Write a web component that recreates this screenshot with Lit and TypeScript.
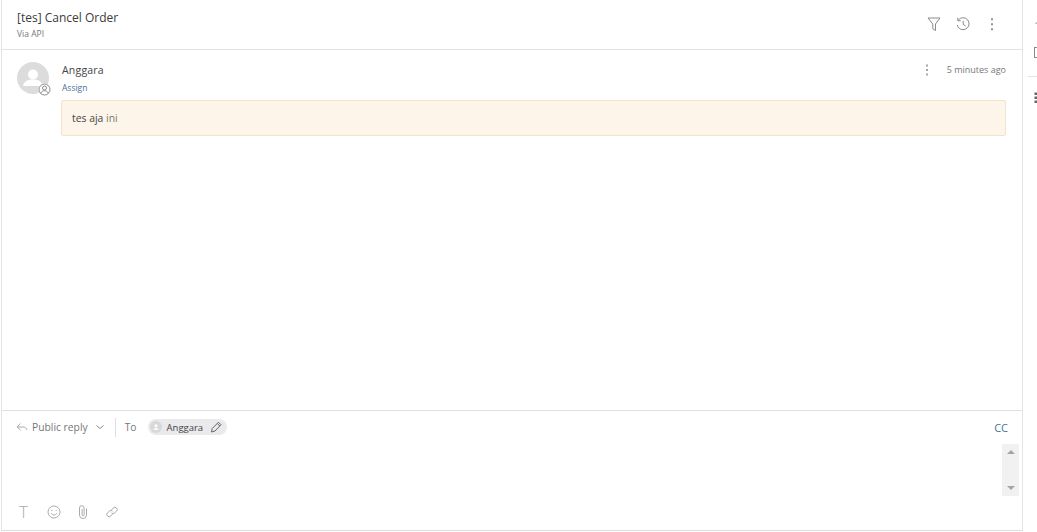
import { LitElement, html, css } from 'lit';
import { customElement } from 'lit/decorators.js';

@customElement('app-root')
export class AppRoot extends LitElement {
  static styles = css`
    :host {
      display: block;
      width: 1037px;
      height: 532px;
      overflow: hidden;
      background: #fff;
      font-family: 'Open Sans', sans-serif;
      color: #333;
    }
    .page {
      display: flex;
      height: 531px;
    }
    .main {
      width: 1022px;
      flex: none;
      box-sizing: border-box;
      margin-left: 1px;
      border-left: 1px solid #e4e4e4;
      border-right: 1px solid #e4e4e4;
      border-bottom: 1px solid #dcdcdc;
      display: flex;
      flex-direction: column;
    }
    .head {
      height: 50px;
      flex: none;
      box-sizing: border-box;
      border-bottom: 1px solid #e2e2e2;
      padding: 9px 15px 0 15px;
      display: flex;
      justify-content: space-between;
    }
    .title {
      font-size: 12px;
      line-height: 17px;
      color: #3b3b3b;
    }
    .via {
      font-size: 8.5px;
      line-height: 12px;
      margin-top: 2px;
      color: #777;
    }
    .head-icons {
      display: flex;
      gap: 13px;
      padding: 7px 7px 0 0;
    }
    .head-icons svg {
      width: 16px;
      height: 16px;
    }
    svg {
      display: block;
      fill: none;
      stroke: #8a8a8a;
      stroke-width: 1;
    }
    .thread {
      flex: 1;
      padding: 12px 16px 0 15px;
      display: flex;
      gap: 13px;
    }
    .avatar {
      position: relative;
      width: 32px;
      height: 32px;
      flex: none;
    }
    .avatar .face {
      width: 32px;
      height: 32px;
    }
    .badge {
      position: absolute;
      right: -2px;
      bottom: -2px;
      width: 13px;
      height: 13px;
      border-radius: 50%;
      background: #fff;
    }
    .body {
      flex: 1;
      min-width: 0;
    }
    .who {
      display: flex;
      justify-content: space-between;
      align-items: flex-start;
    }
    .name {
      font-size: 10.5px;
      line-height: 16px;
      letter-spacing: 0.2px;
      color: #444;
    }
    .assign {
      font-size: 8.5px;
      line-height: 12px;
      margin-top: 4px;
      color: #4a6f9c;
    }
    .when {
      display: flex;
      align-items: center;
      gap: 18px;
      font-size: 9px;
      line-height: 16px;
      color: #777;
    }
    .msg {
      margin: 6px 0 0 -1px;
      height: 36px;
      box-sizing: border-box;
      background: #fef5ea;
      border: 1px solid #f6e2c6;
      border-radius: 2px;
      padding: 0 10px;
      font-size: 10.4px;
      line-height: 34px;
      color: #444;
    }
    .msg span {
      color: #777;
    }
    .composer {
      height: 120px;
      flex: none;
      box-sizing: border-box;
      border-top: 1px solid #e0e0e0;
      display: flex;
      flex-direction: column;
    }
    .to-row {
      display: flex;
      align-items: center;
      height: 20px;
      margin-top: 6px;
      padding: 0 14px 0 14px;
      font-size: 10.3px;
      color: #777;
    }
    .reply {
      margin-left: 4px;
    }
    .caret {
      margin-left: 8px;
      width: 8px;
      height: 8px;
    }
    .sep {
      width: 1px;
      height: 19px;
      background: #dedede;
      margin: 0 9px 0 11px;
    }
    .chip {
      display: flex;
      align-items: center;
      height: 16px;
      margin-left: 11px;
      padding: 0 5px 0 2px;
      gap: 5px;
      background: #eaeaec;
      border-radius: 8px;
      font-size: 9.5px;
      color: #444;
    }
    .chip svg {
      margin-left: 2px;
    }
    .chip .mini {
      margin-left: 0;
    }
    .cc {
      margin-left: auto;
      font-size: 11px;
      color: #4a7396;
    }
    .editor {
      flex: 1;
      display: flex;
      justify-content: flex-end;
      padding: 7px 3px 0 0;
    }
    .scroll {
      width: 17px;
      height: 52px;
      background: #f1f1f1;
      display: flex;
      flex-direction: column;
      justify-content: space-between;
      align-items: center;
      padding: 6px 0;
      box-sizing: border-box;
    }
    .up, .down {
      width: 0;
      height: 0;
      border-left: 4px solid transparent;
      border-right: 4px solid transparent;
    }
    .up { border-bottom: 4px solid #a5a5a5; }
    .down { border-top: 4px solid #a5a5a5; }
    .tools {
      display: flex;
      align-items: center;
      gap: 15px;
      height: 16px;
      padding: 0 0 10px 17px;
    }
    .tools svg {
      width: 14px;
      height: 14px;
    }
    .tools .t {
      font-size: 17px;
      font-weight: 300;
      line-height: 16px;
      color: #aaa;
      width: 13px;
    }
    .side {
      flex: 1;
      min-width: 0;
      position: relative;
    }
    .side svg {
      position: absolute;
    }
    .rule {
      position: absolute;
      left: 5px;
      right: 0;
      top: 76px;
      height: 1px;
      background: #e4e4e4;
    }
  `;

  render() {
    return html`
      <div class="page">
        <div class="main">
          <div class="head">
            <div>
              <div class="title">[tes] Cancel Order</div>
              <div class="via">Via API</div>
            </div>
            <div class="head-icons">
              <svg viewBox="0 0 16 16">
                <path d="M2 2h12L9.500 8v6.500L6.800 12.800V8z" />
              </svg>
              <svg viewBox="0 0 16 16">
                <path d="M3.200 4.200A6 6 0 1 1 2.200 9" />
                <path d="M2.800 1.800v3h3M8.200 4.800v3.600l2.400 1.600" />
              </svg>
              <svg viewBox="0 0 16 16">
                <path d="M8 2.300v2M8 7.300v2M8 12.300v2" stroke="#777" stroke-width="1.600" />
              </svg>
            </div>
          </div>

          <div class="thread">
            <div class="avatar">
              <svg class="face" viewBox="0 0 32 32" style="stroke:none">
                <circle cx="16" cy="16" r="16" fill="#dcdcdc" />
                <circle cx="16" cy="12.500" r="5" fill="#fff" />
                <path d="M6 24c1-5 5-6.500 10-6.500S25 19 26 24z" fill="#fff" />
              </svg>
              <div class="badge">
                <svg viewBox="0 0 13 13" width="13" height="13">
                  <circle cx="6.500" cy="6.500" r="5.500" />
                  <circle cx="6.500" cy="5" r="2" />
                  <path d="M2.800 10.500c.5-2 2-2.800 3.700-2.800s3.200.8 3.700 2.800" />
                </svg>
              </div>
            </div>
            <div class="body">
              <div class="who">
                <div>
                  <div class="name">Anggara</div>
                  <div class="assign">Assign</div>
                </div>
                <div class="when">
                  <svg viewBox="0 0 4 14" width="4" height="14">
                    <path d="M2 1.500v2M2 6v2M2 10.500v2" stroke="#888" stroke-width="1.500" />
                  </svg>
                  <span>5 minutes ago</span>
                </div>
              </div>
              <div class="msg">tes aja <span>ini</span></div>
            </div>
          </div>

          <div class="composer">
            <div class="to-row">
              <svg viewBox="0 0 12 10" width="12" height="10">
                <path d="M4.500 1.500 1 5l3.500 3M1 5h6c2 0 3.500 1 4 3" stroke="#aaa" />
              </svg>
              <span class="reply">Public reply</span>
              <svg class="caret" viewBox="0 0 8 8">
                <path d="M.5 2.500 4 5.500l3.500-3" />
              </svg>
              <div class="sep"></div>
              <span>To</span>
              <div class="chip">
                <svg class="mini" viewBox="0 0 12 12" width="12" height="12" style="stroke:none">
                  <circle cx="6" cy="6" r="6" fill="#d8d8d8" />
                  <circle cx="6" cy="4.800" r="1.500" fill="#fff" />
                  <path d="M3.300 8.800c.3-1.400 1.300-1.900 2.700-1.900s2.400.5 2.700 1.900z" fill="#fff" />
                </svg>
                <span>Anggara</span>
                <svg viewBox="0 0 12 12" width="12" height="12">
                  <path d="M1.500 11l.7-3.500L8.500 1.200l2.500 2.500-6 6.300zM7.300 2.500l2.500 2.500" stroke="#666" />
                </svg>
              </div>
              <span class="cc">CC</span>
            </div>
            <div class="editor">
              <div class="scroll">
                <div class="up"></div>
                <div class="down"></div>
              </div>
            </div>
            <div class="tools">
              <div class="t">T</div>
              <svg viewBox="0 0 14 14">
                <circle cx="7" cy="7" r="6" stroke="#aaa" />
                <path d="M4.200 8.200c.7 1.300 1.700 1.800 2.800 1.800s2.100-.5 2.800-1.800" stroke="#aaa" />
                <path d="M4.800 5v1M9.200 5v1" stroke="#aaa" />
              </svg>
              <svg viewBox="0 0 14 14">
                <path
                  d="M10.500 3.500v6.500a3.500 3.500 0 0 1-7 0V3a2.300 2.300 0 0 1 4.600 0v6.800a1 1 0 0 1-2 0V4"
                  stroke="#aaa"
                />
              </svg>
              <svg viewBox="0 0 14 14">
                <path
                  d="M6.500 5 8.300 2.900a2.300 2.300 0 0 1 3.300 3.200L9.500 8a2.300 2.300 0 0 1-3-.2M7.500 9 5.700 11.100a2.300 2.300 0 0 1-3.300-3.200L4.500 6a2.300 2.300 0 0 1 3 .2"
                  stroke="#aaa"
                />
              </svg>
            </div>
          </div>
        </div>
        <div class="side">
          <svg style="left:12px;top:20px" viewBox="0 0 6 6" width="6" height="6">
            <path d="M.5 4 3 1.500 5.500 4" />
          </svg>
          <svg style="left:11px;top:47px" viewBox="0 0 8 12" width="8" height="12">
            <rect x=".5" y=".5" width="10" height="10" />
          </svg>
          <div class="rule"></div>
          <svg style="left:11px;top:92px" viewBox="0 0 6 12" width="6" height="12">
            <path d="M2 .5v2.500M2 4.500V7M2 8.500V11" stroke="#666" stroke-width="3" />
          </svg>
        </div>
      </div>
    `;
  }
}
